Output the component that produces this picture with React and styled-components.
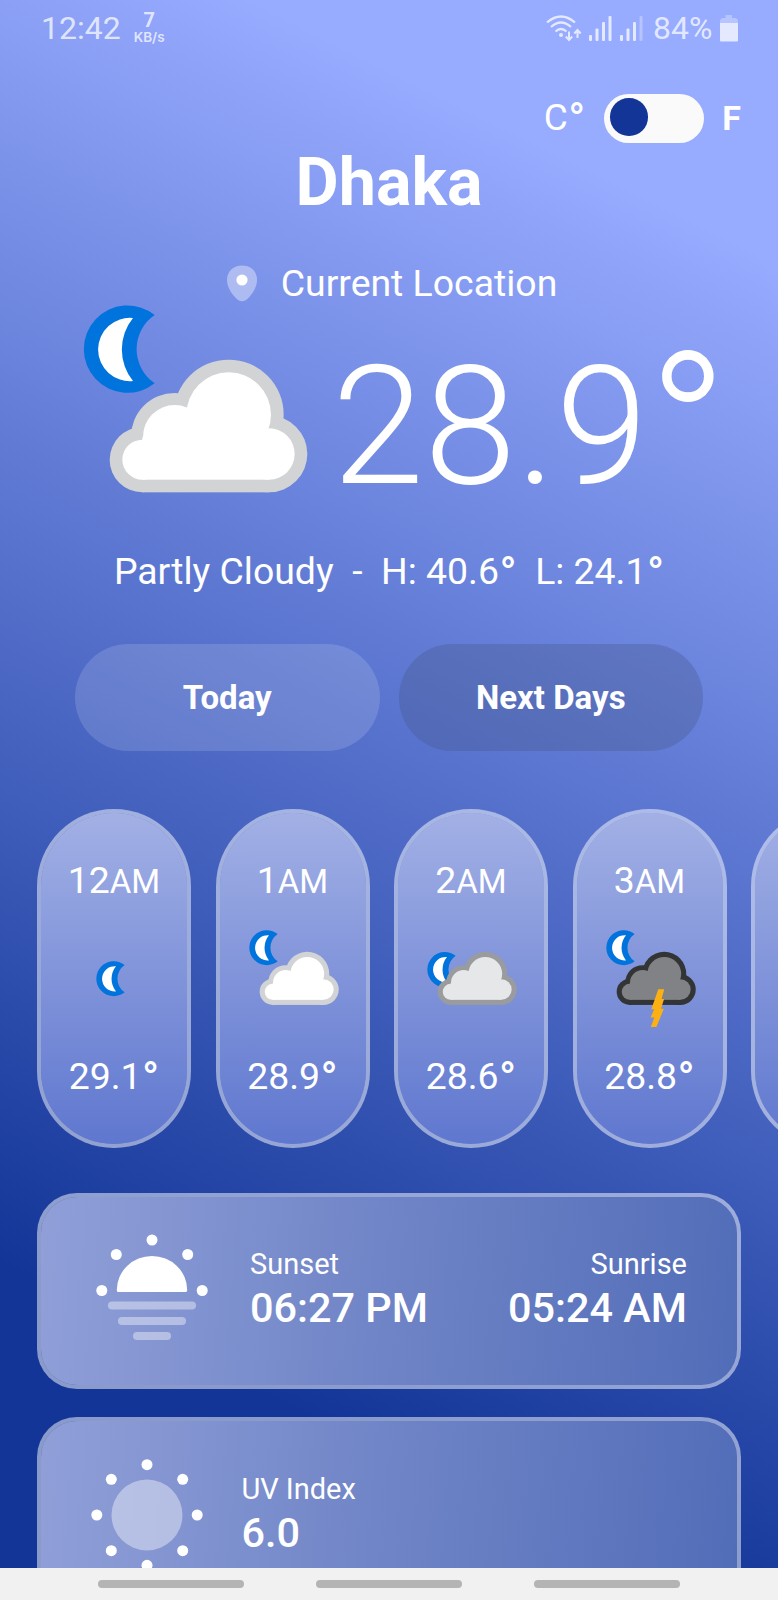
import React from 'react';
import styled, { createGlobalStyle } from 'styled-components';

const GlobalStyle = createGlobalStyle`
  * { box-sizing: border-box; }
  body { margin: 0; overflow: hidden; }
`;

const Phone = styled.div`
  width: 778px;
  height: 1600px;
  display: flex;
  flex-direction: column;
  overflow: hidden;
  font-family: Roboto, sans-serif;
  color: #fff;
  white-space: nowrap;
`;

const Screen = styled.main`
  height: 1568px;
  flex: none;
  overflow: hidden;
  background: linear-gradient(206.4deg, #97abff 13.3%, #123597 84.5%);
`;

const StatusBar = styled.header`
  height: 56px;
  padding: 0 40px 0 41px;
  display: flex;
  justify-content: space-between;
  align-items: center;
  color: rgba(255, 255, 255, 0.74);
  font-size: 32px;
  font-weight: 400;
  line-height: 38px;
`;

const StatusGroup = styled.div`
  display: flex;
  align-items: center;
  gap: ${(p) => p.$gap}px;
`;

const NetSpeed = styled.div`
  display: flex;
  flex-direction: column;
  align-items: center;
  font-weight: 700;
  font-size: 20px;
  line-height: 18px;
  small {
    font-size: 13.5px;
    line-height: 16px;
    font-family: Inter, sans-serif;
    font-weight: 600;
  }
`;

const BatteryLevel = styled.span`
  margin-left: 3px;
`;

const UnitRow = styled.div`
  height: 88px;
  padding: 37px 37px 0 0;
  display: flex;
  justify-content: flex-end;
  align-items: flex-start;
  line-height: 50px;
`;

const UnitText = styled.span`
  font-size: ${(p) => (p.$bold ? 34 : 37)}px;
  font-weight: ${(p) => (p.$bold ? 700 : 400)};
`;

const Toggle = styled.button`
  width: 100px;
  height: 49px;
  margin: 1px 18px 0 19px;
  padding: 4px 6px;
  border: 0;
  border-radius: 25px;
  background: #fafafa;
  display: flex;
`;

const Knob = styled.span`
  width: 37.5px;
  height: 37.5px;
  border-radius: 50%;
  background: #123597;
`;

const City = styled.h1`
  margin: 0;
  height: 76px;
  line-height: 76px;
  font-size: 66.4px;
  font-weight: 700;
  text-align: center;
`;

const Location = styled.div`
  height: 64px;
  margin-top: 31px;
  padding-left: 5px;
  display: flex;
  justify-content: center;
  align-items: center;
  gap: 23px;
  font-size: 37.4px;
  line-height: 64px;
`;

const Hero = styled.section`
  height: 220px;
  margin-top: -10px;
  padding-left: 83px;
  display: flex;
  align-items: flex-start;
`;

const BigTemp = styled.div`
  margin-left: 23px;
  font-size: 166px;
  font-weight: 300;
  line-height: 244px;
`;

const Degree = styled.span`
  display: inline-block;
  font-size: 1.2em;
  font-weight: 500;
  line-height: 0;
  vertical-align: -0.12em;
  margin-left: 0.01em;
`;

const BigDegree = styled(Degree)`
  font-size: 1.3em;
  font-weight: 300;
  vertical-align: -0.1em;
  margin-left: -0.005em;
`;

const Condition = styled.p`
  margin: 21px 0 0;
  height: 50px;
  font-size: 37.4px;
  line-height: 50px;
  text-align: center;
  white-space: pre;
`;

const Tabs = styled.nav`
  height: 107px;
  margin-top: 48px;
  display: flex;
  justify-content: center;
  gap: 19px;
`;

const Tab = styled.button`
  width: 304.5px;
  height: 107px;
  border: 0;
  border-radius: 54px;
  background: ${(p) => (p.$dim ? 'rgba(66, 82, 130, 0.3)' : 'rgba(255, 255, 255, 0.14)')};
  color: #fff;
  font: 700 33px/37px Roboto, sans-serif;
`;

const Hours = styled.section`
  margin-top: 58px;
  padding-left: 37px;
  display: flex;
  gap: 24.5px;
`;

const HourCard = styled.article`
  flex: none;
  width: 154px;
  height: 339px;
  border: 4px solid rgba(255, 255, 255, 0.5);
  border-radius: 77px;
  background: linear-gradient(#a2b0e5, #5f77cf) padding-box;
  display: flex;
  flex-direction: column;
  align-items: center;
  font-size: 37.4px;
`;

const HourLabel = styled.div`
  margin-top: 42px;
  height: 50px;
  line-height: 50px;
  small { font-size: 33px; }
`;

const HourIcon = styled.div`
  height: 146px;
  width: 100%;
  display: flex;
  padding: ${(p) => (p.$alone ? '56px 0 0 55px' : '24.5px 0 0 29px')};
`;

const HourTemp = styled.div`
  line-height: 50px;
`;

const InfoCard = styled.section`
  width: 704px;
  height: 196px;
  margin: ${(p) => p.$top}px 0 0 37px;
  padding-left: ${(p) => p.$inset}px;
  padding-right: 50px;
  border: 4px solid rgba(255, 255, 255, 0.5);
  border-radius: 40px;
  background: linear-gradient(95deg, #909fd8, #7085c7 48%, #526db8) padding-box;
  display: flex;
`;

const InfoText = styled.div`
  margin-top: ${(p) => p.$top || 45}px;
  margin-left: ${(p) => (p.$end ? 'auto' : `${p.$gap}px`)};
  text-align: ${(p) => (p.$end ? 'right' : 'left')};
`;

const InfoLabel = styled.div`
  font-size: 29px;
  line-height: 44px;
`;

const InfoValue = styled.div`
  font-size: 41.4px;
  font-weight: 500;
  line-height: 45px;
`;

const InfoIcon = styled.div`
  margin-top: ${(p) => p.$top}px;
  height: 112px;
`;

const NavBar = styled.footer`
  height: 32px;
  padding: 12px 98px 0;
  background: #f1f1f1;
  display: flex;
  justify-content: space-between;
`;

const NavPill = styled.span`
  width: 146px;
  height: 8px;
  border-radius: 4px;
  background: #b4b4b4;
`;

const Moon = ({ dy = 0 }) => (
  <g transform={`translate(0 ${dy})`}>
    <path fill="#0073dc" d="M285 103A131 131 0 1 0 285 308A124 124 0 0 1 285 103Z" />
    <path fill="#fff" d="M220 112A95 95 0 1 0 220 301A150 150 0 0 1 220 112Z" />
  </g>
);

const Cloud = ({ fill, edge }) => (
  <>
    <g fill={edge}>
      <circle cx="248" cy="537" r="98" />
      <circle cx="345" cy="468" r="131" />
      <circle cx="507" cy="402" r="165" />
      <circle cx="628" cy="520" r="115" />
      <rect x="248" y="470" width="380" height="165" />
    </g>
    <g fill={fill}>
      <circle cx="248" cy="537" r="60" />
      <circle cx="345" cy="468" r="95" />
      <circle cx="507" cy="402" r="127" />
      <circle cx="628" cy="520" r="77" />
      <rect x="248" y="470" width="380" height="127" />
    </g>
  </>
);

const CLOUDS = {
  clear: null,
  partly: { fill: '#fff', edge: '#d1d3d4' },
  cloudy: { fill: '#e6e7e8', edge: '#999b9e' },
  storm: { fill: '#808285', edge: '#333436' },
};

const WeatherIcon = ({ kind, scale }) => {
  const cloud = CLOUDS[kind];
  const w = cloud ? 678 : 220;
  const h = kind === 'storm' ? 740 : cloud ? 564 : 268;
  return (
    <svg width={w * scale} height={h * scale} viewBox={`70 73 ${w} ${h}`}>
      <Moon dy={kind === 'cloudy' ? 164 : 0} />
      {cloud && <Cloud {...cloud} />}
      {kind === 'storm' && (
        <path fill="#fdb014" d="M462 518H507L487 590H506L482 664H504L448 800H406L432 730H404L432 668H410Z" />
      )}
    </svg>
  );
};

const PinIcon = () => (
  <svg width="32" height="37" viewBox="0 0 32 37">
    <path fill="rgba(255,255,255,.38)" d="M16 .5C24.500 .5 31 6 31 15C31 23 25 31 20 35Q16 37.600 12 35C7 31 1 23 1 15C1 6 7.500 .5 16 .5Z" />
    <circle cx="16" cy="15" r="5.600" fill="#fff" />
  </svg>
);

const WifiIcon = () => (
  <svg width="36" height="27" viewBox="0 0 36 27" fill="none" stroke="currentColor" strokeWidth="2.3">
    <path d="M1 7.500Q15 -4.500 29 7.500M5 12Q15 3 25 12M9.500 16.500Q15 11.500 20.500 16.500" />
    <circle cx="15" cy="20" r="2" fill="currentColor" stroke="none" />
    <path strokeWidth="2" d="M23 16.500V25M19.800 21.500L23 25L26.200 21.500M31.500 23V15M28.300 18.500L31.500 15L34.700 18.500" />
  </svg>
);

const SignalIcon = ({ dimLast }) => (
  <svg width="23" height="26" viewBox="0 0 23 26" fill="currentColor">
    <rect x="0" y="20" width="3" height="6" rx="1" />
    <rect x="6.500" y="13.500" width="3" height="12.500" rx="1" />
    <rect x="13" y="7" width="3" height="19" rx="1" />
    <rect x="19.500" y="1" width="3" height="25" rx="1" opacity={dimLast ? 0.4 : 1} />
  </svg>
);

const BatteryIcon = () => (
  <svg width="18" height="27" viewBox="0 0 18 27" fill="currentColor">
    <path opacity=".4" d="M5.500 0H12V3H16L18 5V8H0V5L2 3H5.500Z" />
    <path d="M0 8H18V25.500Q18 26.500 17 26.500H1Q0 26.500 0 25.500Z" />
  </svg>
);

const SunsetIcon = () => (
  <svg width="112" height="108" viewBox="0 0 112 108" fill="#fff">
    {[[56, 6], [20.3, 20.5], [91.7, 20.5], [5.8, 56.5], [106.2, 56.5]].map(([x, y]) => (
      <circle key={`${x}-${y}`} cx={x} cy={y} r="5.5" />
    ))}
    <path d="M22 58Q20.800 58 20.800 56A35.200 34 0 0 1 91.200 56Q91.200 58 90 58Z" />
    <g opacity=".4">
      <rect x="12" y="67.500" width="88" height="8" rx="4" />
      <rect x="22" y="83" width="68" height="8" rx="4" />
      <rect x="37" y="98" width="38" height="8" rx="4" />
    </g>
  </svg>
);

const SunIcon = () => (
  <svg width="112" height="112" viewBox="0 0 112 112" fill="#fff">
    <circle cx="56" cy="56" r="35.500" opacity=".4" />
    {[[56, 5.7], [91.7, 20.3], [106.2, 56], [91.7, 91.7], [56, 106.3], [20.3, 91.7], [5.8, 56], [20.3, 20.3]].map(([x, y]) => (
      <circle key={`${x}-${y}`} cx={x} cy={y} r="5.5" />
    ))}
  </svg>
);

const HOURS = [
  { hour: 12, temp: '29.1', kind: 'clear' },
  { hour: 1, temp: '28.9', kind: 'partly' },
  { hour: 2, temp: '28.6', kind: 'cloudy' },
  { hour: 3, temp: '28.8', kind: 'storm' },
];

export default function App() {
  return (
    <Phone>
      <GlobalStyle />
      <Screen>
        <StatusBar>
          <StatusGroup $gap={13}>
            <span>12:42</span>
            <NetSpeed>7<small>KB/s</small></NetSpeed>
          </StatusGroup>
          <StatusGroup $gap={7.5}>
            <WifiIcon />
            <SignalIcon />
            <SignalIcon dimLast />
            <BatteryLevel>84%</BatteryLevel>
            <BatteryIcon />
          </StatusGroup>
        </StatusBar>
        <UnitRow>
          <UnitText>C<Degree>°</Degree></UnitText>
          <Toggle aria-label="Temperature unit"><Knob /></Toggle>
          <UnitText $bold>F</UnitText>
        </UnitRow>
        <City>Dhaka</City>
        <Location><PinIcon />Current Location</Location>
        <Hero>
          <WeatherIcon kind="partly" scale={1 / 3} />
          <BigTemp>28.9<BigDegree>°</BigDegree></BigTemp>
        </Hero>
        <Condition>Partly Cloudy  -  H: 40.6<Degree>°</Degree>  L: 24.1<Degree>°</Degree></Condition>
        <Tabs>
          <Tab>Today</Tab>
          <Tab $dim>Next Days</Tab>
        </Tabs>
        <Hours>
          {HOURS.map((h) => (
            <HourCard key={h.hour}>
              <HourLabel>{h.hour}<small>AM</small></HourLabel>
              <HourIcon $alone={h.kind === 'clear'}><WeatherIcon kind={h.kind} scale={0.4 / 3} /></HourIcon>
              <HourTemp>{h.temp}<Degree>°</Degree></HourTemp>
            </HourCard>
          ))}
          <HourCard />
        </Hours>
        <InfoCard $top={45} $inset={55}>
          <InfoIcon $top={37}><SunsetIcon /></InfoIcon>
          <InfoText $gap={42}>
            <InfoLabel>Sunset</InfoLabel>
            <InfoValue>06:27 PM</InfoValue>
          </InfoText>
          <InfoText $end>
            <InfoLabel>Sunrise</InfoLabel>
            <InfoValue>05:24 AM</InfoValue>
          </InfoText>
        </InfoCard>
        <InfoCard $top={28} $inset={50.4}>
          <InfoIcon $top={38}><SunIcon /></InfoIcon>
          <InfoText $gap={38} $top={46}>
            <InfoLabel>UV Index</InfoLabel>
            <InfoValue>6.0</InfoValue>
          </InfoText>
        </InfoCard>
      </Screen>
      <NavBar><NavPill /><NavPill /><NavPill /></NavBar>
    </Phone>
  );
}
